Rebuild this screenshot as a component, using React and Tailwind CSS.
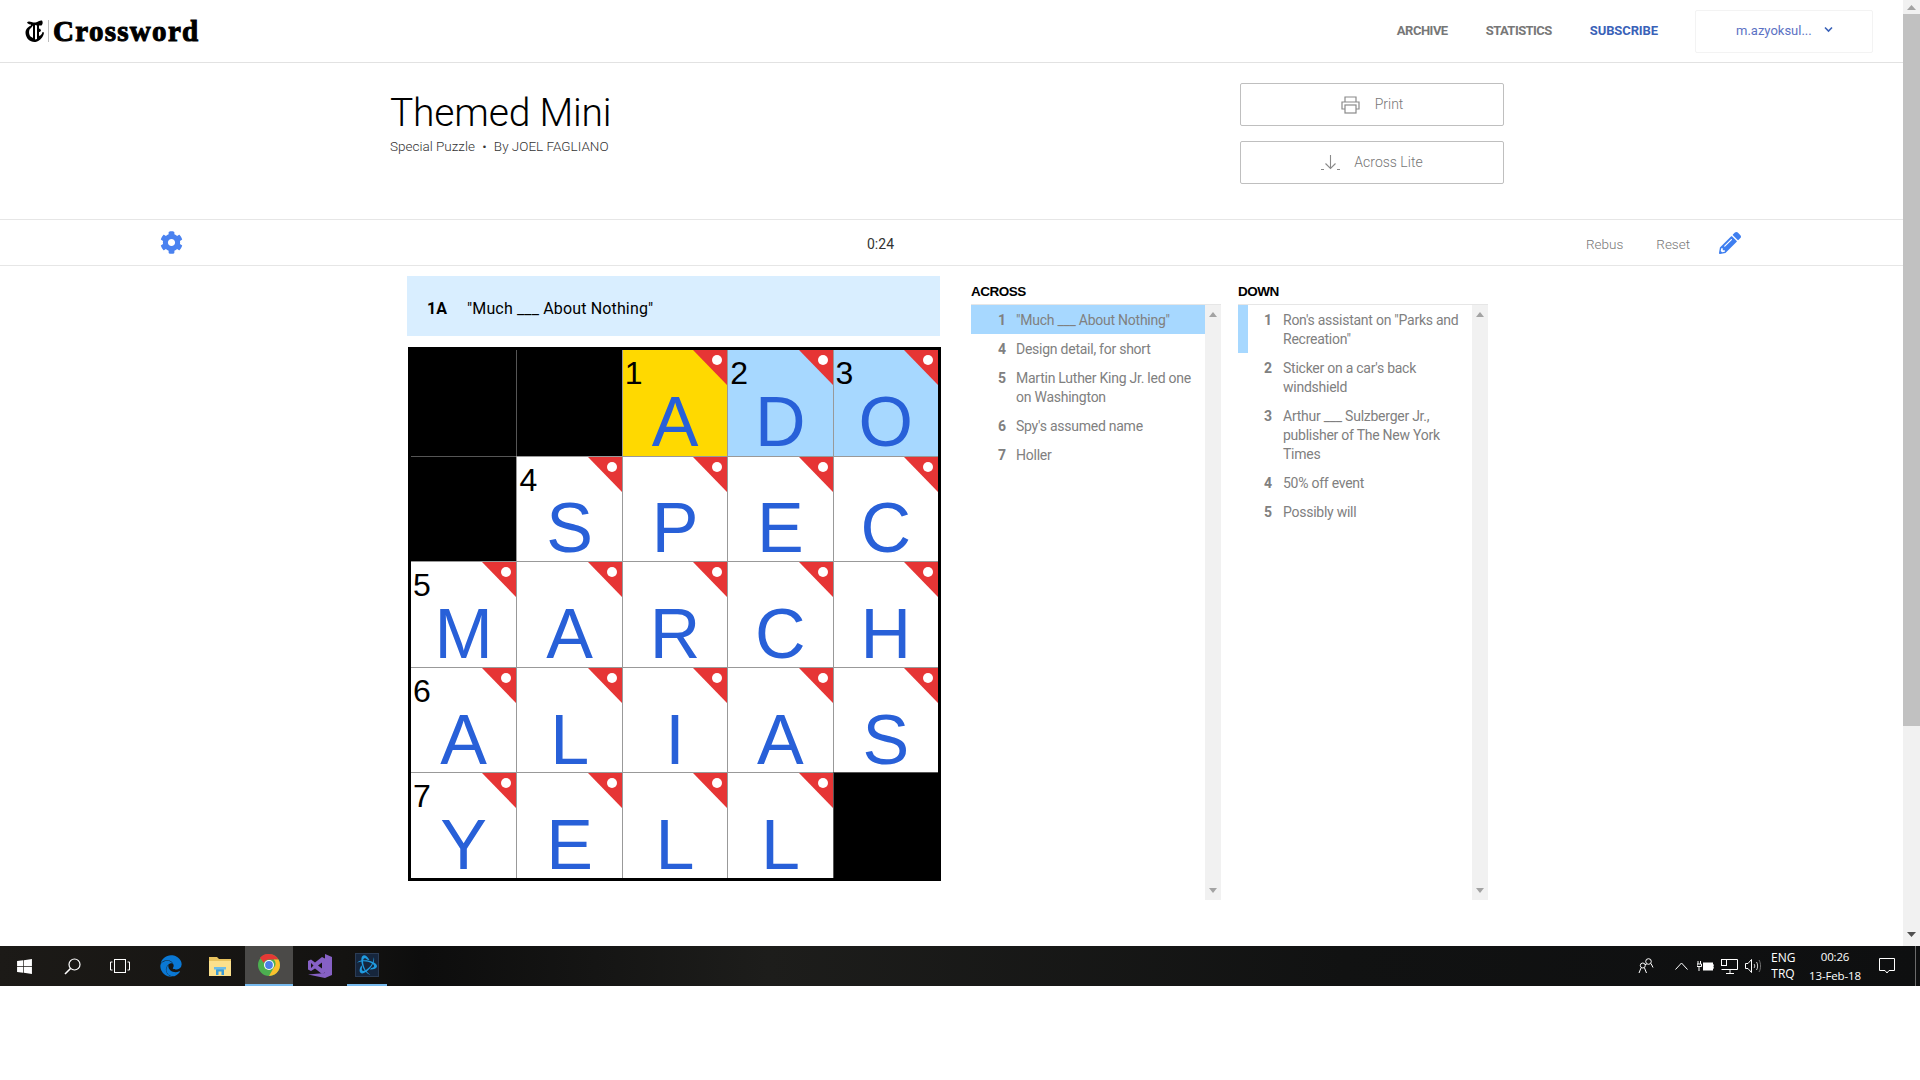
import { FaCog, FaPencilAlt, FaEdge, FaWindows } from "react-icons/fa";
import { SiBattledotnet } from "react-icons/si";

const GRID = [
  [null, null, { n: 1, l: "A", hl: "cur" }, { n: 2, l: "D", hl: "word" }, { n: 3, l: "O", hl: "word" }],
  [null, { n: 4, l: "S" }, { l: "P" }, { l: "E" }, { l: "C" }],
  [{ n: 5, l: "M" }, { l: "A" }, { l: "R" }, { l: "C" }, { l: "H" }],
  [{ n: 6, l: "A" }, { l: "L" }, { l: "I" }, { l: "A" }, { l: "S" }],
  [{ n: 7, l: "Y" }, { l: "E" }, { l: "L" }, { l: "L" }, null],
];

const ACROSS = [
  { n: 1, t: '"Much ___ About Nothing"', active: true },
  { n: 4, t: "Design detail, for short" },
  { n: 5, t: "Martin Luther King Jr. led one\non Washington" },
  { n: 6, t: "Spy's assumed name" },
  { n: 7, t: "Holler" },
];

const DOWN = [
  { n: 1, t: 'Ron\'s assistant on "Parks and\nRecreation"', active: true },
  { n: 2, t: "Sticker on a car's back\nwindshield" },
  { n: 3, t: "Arthur ___ Sulzberger Jr.,\npublisher of The New York\nTimes" },
  { n: 4, t: "50% off event" },
  { n: 5, t: "Possibly will" },
];

function Cell({ cell, col, row }) {
  const left = col > 0 ? "border-l" : "";
  const top = row > 0 ? "border-t" : "";
  if (!cell) {
    return <div className={`bg-black border-[#555] ${left} ${top}`} />;
  }
  const bg = cell.hl === "cur" ? "bg-[#ffd900]" : cell.hl === "word" ? "bg-[#a7d8ff]" : "bg-white";
  return (
    <div className={`relative flex items-center justify-center pt-[39px] border-[#999] ${bg} ${left} ${top}`}>
      {cell.n && (
        <span className="absolute left-[2px] top-[7px] text-[32px] leading-none text-black font-['Liberation_Sans',sans-serif]">
          {cell.n}
        </span>
      )}
      <span className="text-[70px] leading-none text-[#2860d8] font-['Liberation_Sans',sans-serif]">{cell.l}</span>
      {/* red corner with the white dot */}
      <svg className="absolute right-0 top-0" width="34" height="35" viewBox="0 0 34 35">
        <polygon points="0,0 34,0 34,35" fill="#e63535" />
        <circle cx="24" cy="10" r="5" fill="#fff" />
      </svg>
    </div>
  );
}

function ClueList({ title, clues, wide }) {
  return (
    <div className="w-[250px] flex flex-col">
      <div className="h-[28px] pt-[8px] text-[13.5px] leading-[16px] font-bold text-black font-['Liberation_Sans',sans-serif] tracking-[-0.5px]">
        {title}
      </div>
      <div className="h-[596px] flex border-t border-[#e6e6e6]">
        <ul className="flex-1">
          {clues.map((c) => (
            <li
              key={c.n}
              className={`flex pt-[6px] pb-[4px] text-[14px] leading-[19px] text-[#808080] font-['Roboto',sans-serif] ${
                c.active && !wide ? "bg-[#a7d8ff]" : ""
              } ${wide ? "border-l-[10px] " + (c.active ? "border-[#a7d8ff]" : "border-transparent") : ""}`}
            >
              <span className={`text-right font-bold ${wide ? "w-[24px] mr-[11px]" : "w-[35px] mr-[10px]"}`}>{c.n}</span>
              <span className="whitespace-pre-line tracking-[-0.25px]">{c.t}</span>
            </li>
          ))}
        </ul>
        <MiniScrollbar />
      </div>
    </div>
  );
}

function MiniScrollbar() {
  return (
    <div className="w-[16px] bg-[#f1f1f1] flex flex-col justify-between items-center py-[7px]">
      <svg width="8" height="5" viewBox="0 0 8 5"><polygon points="4,0 8,5 0,5" fill="#a3a3a3" /></svg>
      <svg width="8" height="5" viewBox="0 0 8 5"><polygon points="0,0 8,0 4,5" fill="#a3a3a3" /></svg>
    </div>
  );
}

function NytMark() {
  return (
    <svg width="20" height="24" viewBox="0 0 20 24" className="shrink-0">
      <path d="M2 3.500C4 1 7 4 10.500 3.500C13 3 15 1 17 1.500C18 3 18 5 16.500 6.500L14 6.500L14 17C16 16.500 17 15 17.500 13L19 13.500C18.500 18 15 22 10.500 23C5 23.500 1 19.500 .5 14C.5 10 3 8 6 6.500L6 5.500C4.500 5.500 3 5 2 3.500Z" fill="#000" />
      <path d="M8 6.500L8 19L5.500 17.500C3.500 15 3.500 10.500 6 9Z" fill="#fff" />
      <path d="M10 6L12 6.500L12 20L10 20.500Z" fill="#fff" />
      <path d="M12 11L15 9.500L16 11.500L15 13L12 12.500Z" fill="#000" />
    </svg>
  );
}

function PrintIcon() {
  return (
    <svg width="19" height="18" viewBox="0 0 19 18" fill="none" stroke="#8a8a8a" strokeWidth="1.200">
      <path d="M4 6V1h11v5" />
      <path d="M4 13H1V6h17v7h-3" />
      <rect x="4" y="9" width="11" height="8" />
    </svg>
  );
}

function DownloadIcon() {
  return (
    <svg width="19" height="16" viewBox="0 0 19 16" fill="none" stroke="#8a8a8a" strokeWidth="1.100">
      <path d="M9.500 0v13M4.500 8.500l5 5 5-5" />
      <path d="M0 14.500h3M16 14.500h3" />
    </svg>
  );
}

function ChromeIcon() {
  return (
    <svg width="22" height="22" viewBox="0 0 22 22">
      <circle cx="11" cy="11" r="11" fill="#4caf50" />
      <path d="M11 0a11 11 0 0 1 9.500 5.500H11a5.500 5.500 0 0 0-5.200 3.600L2 3.800A11 11 0 0 1 11 0Z" fill="#e53935" />
      <path d="M20.500 5.500A11 11 0 0 1 11 22l4.700-8.200a5.500 5.500 0 0 0 0-8.300Z" fill="#fbc02d" />
      <circle cx="11" cy="11" r="5" fill="#fff" />
      <circle cx="11" cy="11" r="3.900" fill="#4a7fe8" />
    </svg>
  );
}

function ExplorerIcon() {
  return (
    <svg width="22" height="20" viewBox="0 0 22 20">
      <path d="M0 1h8l2 2h12v4H0Z" fill="#e8c35e" />
      <rect x="0" y="5" width="22" height="15" fill="#fbe08c" />
      <path d="M7 19v-5a2 2 0 0 1 2-2h4a2 2 0 0 1 2 2v5h-2.500v-3.500h-3V19Z" fill="#3a9bd6" />
      <rect x="5" y="11" width="12" height="2.500" fill="#6dbde8" />
    </svg>
  );
}

function VsIcon() {
  return (
    <svg width="24" height="24" viewBox="0 0 24 24">
      <path d="M17 0l7 3v18l-7 3L0 20.500 17 19Z" fill="#8661c5" />
      <path d="M0 7l3-1.500 4 3L14 3l3 1.500v14L14 20l-7-5.500L3 17l-3-1.500ZM3 9v5l2.500-2.500ZM10 11.500l4 3V8.500Z" fill="#8661c5" fillRule="evenodd" />
    </svg>
  );
}

function ClientScroll() {
  return (
    <div className="w-[17px] bg-[#f1f1f1] flex flex-col items-center">
      <div className="h-[14px] flex items-center justify-center">
        <svg width="9" height="5" viewBox="0 0 9 5"><polygon points="4.500,0 9,5 0,5" fill="#a3a3a3" /></svg>
      </div>
      <div className="w-full h-[712px] bg-[#c1c1c1]" />
      <div className="mt-auto h-[24px] flex items-center justify-center">
        <svg width="9" height="5" viewBox="0 0 9 5"><polygon points="0,0 9,0 4.500,5" fill="#505050" /></svg>
      </div>
    </div>
  );
}

function Taskbar() {
  return (
    <div className="h-[40px] flex items-center text-white bg-[linear-gradient(90deg,#1c1a17,#141311_18%,#0d0d0d_22%,#1d1d1b_40%,#111212_70%,#0e0f10)] font-['Open_Sans',sans-serif]">
      <div className="w-[48px] flex justify-center"><FaWindows size={17} /></div>
      <div className="w-[48px] flex justify-center">
        <svg width="17" height="17" viewBox="0 0 17 17" fill="none" stroke="#fff" strokeWidth="1.200">
          <circle cx="10.500" cy="6.500" r="5.500" />
          <path d="M6.500 10.500L1 16" strokeWidth="1.600" />
        </svg>
      </div>
      <div className="w-[48px] flex justify-center">
        <svg width="20" height="14" viewBox="0 0 20 14" fill="none" stroke="#fff" strokeWidth="1">
          <rect x="4.500" y=".5" width="11" height="13" />
          <path d="M2.500 3H.5v8h2M17.500 3h2v8h-2" />
        </svg>
      </div>
      <div className="w-[53px] flex justify-center"><FaEdge size={22} className="text-[#0a78d4]" /></div>
      <div className="w-[48px] pr-[2px] flex justify-center"><ExplorerIcon /></div>
      <div className="w-[48px] h-full flex justify-center items-center bg-[#4b4a48] border-b-2 border-[#76b9ed]"><ChromeIcon /></div>
      <div className="w-[54px] flex justify-center"><VsIcon /></div>
      <div className="w-[40px] h-full flex justify-center items-center border-b-2 border-[#76b9ed]">
        <div className="w-[24px] h-[24px] flex items-center justify-center bg-[#16263d] border border-[#2b3c55]">
          <SiBattledotnet size={20} className="text-[#1f9be0]" />
        </div>
      </div>

      <svg className="ml-[1251px]" width="16" height="16" viewBox="0 0 16 16" fill="none" stroke="#fff" strokeWidth="1">
        <circle cx="10.500" cy="3.500" r="2.800" />
        <circle cx="4.800" cy="7.500" r="2.500" />
        <path d="M1 15l2-5M8.500 15l-2-5M7 6.500l1.500 0M13 5.500l2 4" />
      </svg>
      <svg className="ml-[21px]" width="13" height="8" viewBox="0 0 13 8" fill="none" stroke="#fff" strokeWidth="1">
        <path d="M.5 7.500l6-6.500 6 6.500" />
      </svg>
      <svg className="ml-[9px]" width="17" height="12" viewBox="0 0 17 12" fill="none" stroke="#fff">
        <rect x="6.500" y="3" width="9" height="7" fill="#fff" />
        <path d="M15.500 5v3h1.500V5ZM1 1v3M3.500 1v3M0 4h4.500v2.500H0ZM2 7v4" />
      </svg>
      <svg className="ml-[7px]" width="17" height="15" viewBox="0 0 17 15" fill="none" stroke="#fff">
        <path d="M4 .5h12.500v10H.5M9 11v3M5 14.500h8" />
        <rect x=".5" y=".5" width="5" height="6" />
      </svg>
      <svg className="ml-[7px]" width="16" height="14" viewBox="0 0 16 14" fill="none" stroke="#fff">
        <path d="M.5 4.500h2.500l3.500-4v13l-3.500-4H.5Z" />
        <path d="M9 5c1 1 1 3 0 4M11.500 3c1.500 2 1.500 6 0 8" strokeWidth=".8" />
        <path d="M14 1c2 3 2 9 0 12" stroke="#888" strokeWidth=".8" />
      </svg>
      <div className="ml-[10px] w-[24px] text-[12px] leading-[16px] text-center">
        <div>ENG</div>
        <div>TRQ</div>
      </div>
      <div className="ml-[13px] w-[54px] text-[11.5px] leading-[19px] text-center whitespace-nowrap tracking-[-0.15px]">
        <div>00:26</div>
        <div>13-Feb-18</div>
      </div>
      <svg className="ml-[17px]" width="16" height="16" viewBox="0 0 16 16" fill="none" stroke="#fff">
        <path d="M.5.5h15v12H10l-2 2.500L6 12.500H.5Z" />
      </svg>
      <div className="ml-[20px] w-px h-full bg-[#6b6b6b]" />
    </div>
  );
}

export default function App() {
  return (
    <div className="w-[1920px] h-[1080px] overflow-hidden bg-white flex flex-col font-['Roboto',sans-serif]">
      <div className="h-[946px] flex">
        <main className="w-[1903px] flex flex-col">
          {/* top nav */}
          <header className="h-[63px] flex items-center border-b border-[#e2e2e2]">
            <div className="ml-[25px] flex items-center">
              <NytMark />
              <div className="ml-[3px] w-px h-[22px] bg-[#bdbdbd]" />
              <span className="ml-[4px] text-[29px] leading-none font-bold text-black font-['Liberation_Serif',serif] tracking-[1.3px] [-webkit-text-stroke:1px_#000]">
                Crossword
              </span>
            </div>
            <nav className="ml-auto flex items-center text-[13px] font-bold">
              <a className="text-[#777] tracking-[-0.5px]">ARCHIVE</a>
              <a className="ml-[38px] text-[#777] tracking-[-0.55px]">STATISTICS</a>
              <a className="ml-[38px] text-[#3a62b8] tracking-[-0.1px]">SUBSCRIBE</a>
              <div className="ml-[37px] mr-[30px] w-[178px] h-[43px] flex items-center pl-[40px] border border-[#f3f3f3] rounded-[2px] font-normal text-[#5c72c4]">
                m.azyoksul...
                <svg className="ml-[12px] mb-[3px]" width="9" height="7" viewBox="0 0 9 7" fill="none" stroke="#3a62b8" strokeWidth="1.600">
                  <path d="M1 1.500l3.500 3.500 3.500-3.500" />
                </svg>
              </div>
            </nav>
          </header>

          {/* title and downloads */}
          <section className="h-[157px] flex pl-[390px] border-b border-[#e6e6e6]">
            <div className="w-[850px] pt-[27px]">
              <h1 className="text-[39px] leading-[46px] font-light text-black tracking-[-0.2px]">Themed Mini</h1>
              <p className="mt-[1px] text-[13.5px] leading-[18px] font-light text-[#333]">
                Special Puzzle <span className="mx-[4px]">•</span> By JOEL FAGLIANO
              </p>
            </div>
            <div className="pt-[20px] flex flex-col gap-[15px]">
              <button className="w-[264px] h-[43px] flex items-center justify-center border border-[#bfbfbf] rounded-[2px] text-[14px] text-[#777]">
                <PrintIcon />
                <span className="ml-[15px] font-light">Print</span>
              </button>
              <button className="w-[264px] h-[43px] flex items-center justify-center border border-[#bfbfbf] rounded-[2px] text-[14px] text-[#777]">
                <DownloadIcon />
                <span className="ml-[14px] font-light">Across Lite</span>
              </button>
            </div>
          </section>

          {/* toolbar */}
          <div className="h-[46px] flex items-center border-b border-[#e6e6e6] pl-[160px]">
            <FaCog size={23} className="text-[#4a82f0]" />
            <span className="ml-[684px] pt-[3px] text-[14px] text-[#333]">0:24</span>
            <span className="ml-[692px] pt-[3px] text-[13.5px] font-light text-[#777]">Rebus</span>
            <span className="ml-[33px] pt-[3px] text-[13.5px] font-light text-[#777]">Reset</span>
            <FaPencilAlt size={22} className="ml-[29px] text-[#3f7ff0]" />
          </div>

          {/* board + clues */}
          <div className="flex pl-[407px] pt-[10px]">
            <div className="w-[534px] flex flex-col gap-[11px]">
              <div className="h-[60px] w-[533px] flex items-center pl-[20px] pt-[5px] bg-[#d9eeff] text-[16px] text-black">
                <span className="w-[40px] font-bold">1A</span>
                <span className="font-normal tracking-[0.15px]">"Much ___ About Nothing"</span>
              </div>
              <div className="ml-[1px] w-[533px] h-[534px] border-[3px] border-black grid grid-cols-5 grid-rows-5">
                {GRID.map((row, r) =>
                  row.map((cell, c) => <Cell key={`${r}-${c}`} cell={cell} col={c} row={r} />)
                )}
              </div>
            </div>
            <div className="ml-[30px] flex gap-[17px]">
              <ClueList title="ACROSS" clues={ACROSS} />
              <ClueList title="DOWN" clues={DOWN} wide />
            </div>
          </div>
        </main>
        <ClientScroll />
      </div>
      <Taskbar />
    </div>
  );
}
